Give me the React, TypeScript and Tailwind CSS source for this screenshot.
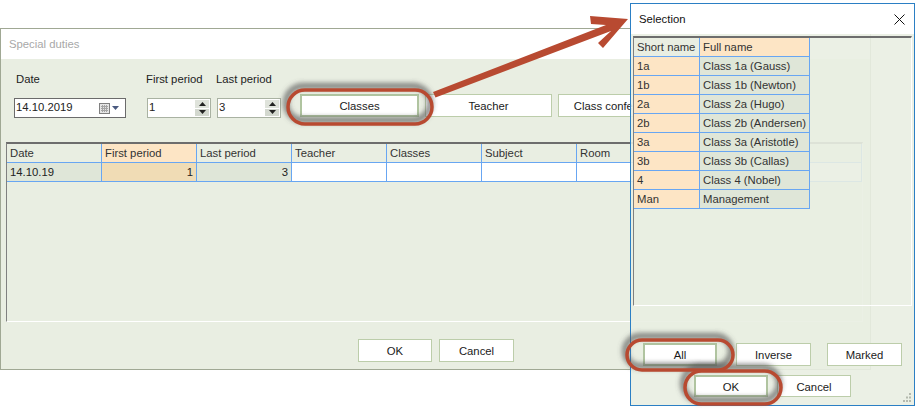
import React from "react";

const dutyColumns = ["Date", "First period", "Last period", "Teacher", "Classes", "Subject", "Room", "", ""];

const classes = [
  ["1a", "Class 1a (Gauss)"],
  ["1b", "Class 1b (Newton)"],
  ["2a", "Class 2a (Hugo)"],
  ["2b", "Class 2b (Andersen)"],
  ["3a", "Class 3a (Aristotle)"],
  ["3b", "Class 3b (Callas)"],
  ["4", "Class 4 (Nobel)"],
  ["Man", "Management"],
];

function WinButton({ label, className = "" }: { label: string; className?: string }) {
  return (
    <button className={`h-[23px] shrink-0 whitespace-nowrap border border-[#bccdaa] bg-white pt-[2px] text-[11.3px] text-[#1a1a1a] ${className}`}>
      {label}
    </button>
  );
}

function FocusButton({ label, className = "" }: { label: string; className?: string }) {
  return (
    <button className={`h-[23px] shrink-0 border-2 border-[#b0c4a0] bg-white pt-[2px] text-[11.3px] text-[#1a1a1a] ${className}`}>
      {label}
    </button>
  );
}

function SpinBox({ value }: { value: string }) {
  return (
    <div className="flex h-[20px] w-[64px] items-center justify-between border border-[#a9b2a2] bg-white pl-[1px] pr-[1px]">
      <span className="text-[11.3px] leading-none text-[#222]">{value}</span>
      <div className="flex h-[16px] w-[14px] flex-col gap-[1px]">
        <div className="flex flex-1 items-center justify-center bg-[#dfe3db]">
          <svg width="7" height="4" viewBox="0 0 7 4">
            <path d="M3.5 0 L7 4 H0 Z" fill="#222" />
          </svg>
        </div>
        <div className="flex flex-1 items-center justify-center bg-[#d3d8cf]">
          <svg width="7" height="4" viewBox="0 0 7 4">
            <path d="M0 0 H7 L3.5 4 Z" fill="#222" />
          </svg>
        </div>
      </div>
    </div>
  );
}

function DatePicker() {
  return (
    <div className="flex h-[20px] w-[112px] items-center justify-between border border-[#6b6b6b] bg-white pl-[1px] pr-[6px]">
      <span className="text-[11.3px] leading-none text-[#222]">14.10.2019</span>
      <div className="flex items-center gap-[2px]">
        <svg width="11" height="11" viewBox="0 0 11 11">
          <rect x="0.5" y="0.5" width="10" height="10" fill="#e6e6e6" stroke="#808080" />
          <path d="M2 3.5H9M2 5.5H9M2 7.5H9M3.5 2V9M5.5 2V9M7.5 2V9" stroke="#a5a5a5" strokeWidth="1" />
        </svg>
        <svg width="7" height="4" viewBox="0 0 7 4">
          <path d="M0 0 H7 L3.5 4 Z" fill="#4a5a80" />
        </svg>
      </div>
    </div>
  );
}

function SpecialDuties() {
  return (
    <div className="absolute left-0 top-[28px] h-[342px] w-[871px] border border-[#a0a894] bg-[#e9eee2]">
      <div className="flex h-[30px] items-center bg-white pl-[8px] text-[11.3px] text-[#a8a8a8]">Special duties</div>

      <div className="flex items-end pl-[13px] pt-[13px]">
        <div className="flex w-[112px] flex-col gap-[12px]">
          <span className="h-[14px] pl-[2px] text-[11.3px] leading-[14px] text-[#222]">Date</span>
          <DatePicker />
        </div>
        <div className="ml-[21px] flex w-[64px] flex-col gap-[12px]">
          <span className="-ml-[1px] h-[14px] whitespace-nowrap text-[11.3px] leading-[14px] text-[#222]">First period</span>
          <SpinBox value="1" />
        </div>
        <div className="ml-[6px] flex w-[64px] flex-col gap-[12px]">
          <span className="-ml-[1px] h-[14px] whitespace-nowrap text-[11.3px] leading-[14px] text-[#222]">Last period</span>
          <SpinBox value="3" />
        </div>
        <div className="mb-[1px] ml-[19px] flex gap-[6px]">
          <FocusButton label="Classes" className="w-[119px]" />
          <WinButton label="Teacher" className="w-[127px]" />
          <WinButton label="Class conference" className="w-[119px]" />
        </div>
      </div>

      <div className="ml-[5px] mt-[24px] h-[180px] w-[857px] border-b border-l border-r border-t-2 border-b-white border-l-[#808080] border-r-white border-t-[#6d6d6d]">
        <div className="flex h-[19px] border-b border-[#68a6f2]">
          {dutyColumns.map((name, i) => (
            <div
              key={i}
              className={`h-[18px] w-[95px] shrink-0 border-r border-[#68a6f2] pl-[3px] text-[11.3px] leading-[18px] text-[#333] ${
                i === 1 ? "bg-[#fde5c5]" : ""
              }`}
            >
              {name}
            </div>
          ))}
        </div>
        <div className="flex h-[19px] border-b border-[#68a6f2]">
          <div className="h-[18px] w-[95px] shrink-0 border-r border-[#68a6f2] bg-[#dfe6d8] pl-[3px] text-[11.3px] leading-[18px] text-[#222]">14.10.19</div>
          <div className="h-[18px] w-[95px] shrink-0 border-r border-[#68a6f2] bg-[#f0dcb5] pr-[3px] text-right text-[11.3px] leading-[18px] text-[#222]">1</div>
          <div className="h-[18px] w-[95px] shrink-0 border-r border-[#68a6f2] bg-[#dfe6d8] pr-[3px] text-right text-[11.3px] leading-[18px] text-[#222]">3</div>
          {[0, 1, 2, 3, 4, 5].map((i) => (
            <div key={i} className="h-[18px] w-[95px] shrink-0 border-r border-[#68a6f2] bg-white" />
          ))}
        </div>
      </div>

      <div className="flex gap-[7px] pl-[357px] pt-[17px]">
        <WinButton label="OK" className="w-[74px]" />
        <WinButton label="Cancel" className="w-[75px]" />
      </div>
    </div>
  );
}

function SelectionDialog() {
  return (
    <div className="absolute left-[630px] top-[3px] flex h-[403px] w-[285px] flex-col border border-[#2b7fc4] bg-[#e9eee2]/90">
      <div className="flex h-[30px] shrink-0 items-center justify-between bg-white pl-[8px] pr-[9px]">
        <span className="text-[11.3px] text-[#111]">Selection</span>
        <svg width="11" height="11" viewBox="0 0 11 11">
          <path d="M0.5 0.5 L10.5 10.5 M10.5 0.5 L0.5 10.5" stroke="#111" strokeWidth="1" fill="none" />
        </svg>
      </div>
      <div className="ml-[2px] mr-[2px] mt-[2px] h-[270px] shrink-0 border-b border-l border-r border-t-2 border-b-white border-l-[#808080] border-r-white border-t-[#6d6d6d]">
        <div className="flex h-[19px]">
          <div className="h-[19px] w-[66px] whitespace-nowrap border-b border-r border-[#68a6f2] bg-[#e9eee2] pl-[3px] text-[11.3px] leading-[19px] text-[#333]">Short name</div>
          <div className="h-[19px] w-[110px] whitespace-nowrap border-b border-r border-[#68a6f2] bg-[#fde5c5] pl-[3px] text-[11.3px] leading-[19px] text-[#333]">Full name</div>
        </div>
        {classes.map(([short, full]) => (
          <div key={short} className="flex h-[19px]">
            <div className="h-[19px] w-[66px] border-b border-r border-[#68a6f2] bg-[#fde5c5] pl-[3px] text-[11.3px] leading-[19px] text-[#333]">{short}</div>
            <div className="h-[19px] w-[110px] whitespace-nowrap border-b border-r border-[#68a6f2] bg-[#dfe6d8] pl-[3px] text-[11.3px] leading-[19px] text-[#333]">{full}</div>
          </div>
        ))}
      </div>
      <div className="flex pl-[12px] pt-[37px]">
        <FocusButton label="All" className="w-[74px]" />
        <WinButton label="Inverse" className="ml-[19px] w-[75px]" />
        <WinButton label="Marked" className="ml-[16px] w-[75px]" />
      </div>
      <div className="flex pl-[63px] pt-[9px]">
        <FocusButton label="OK" className="!h-[22px] w-[74px]" />
        <WinButton label="Cancel" className="ml-[9px] !h-[22px] w-[74px]" />
      </div>
      <svg className="absolute bottom-[2px] right-[2px]" width="10" height="10" viewBox="0 0 10 10">
        <path d="M7 0h2v2H7zM4 3.500h2v2H4zM7 3.500h2v2H7zM1 7h2v2H1zM4 7h2v2H4zM7 7h2v2H7z" fill="#b4b9ae" />
      </svg>
    </div>
  );
}

const rings = [
  { x: 288, y: 90, w: 144, h: 34 },
  { x: 627, y: 340, w: 106, h: 30 },
  { x: 685, y: 371, w: 96, h: 33 },
];

// callouts painted over the screenshot: rings round the buttons and the arrow
function Annotations() {
  return (
    <svg className="pointer-events-none absolute left-0 top-0" width="917" height="410" viewBox="0 0 917 410">
      <defs>
        <filter id="ringBlur" x="-20%" y="-50%" width="140%" height="200%">
          <feGaussianBlur stdDeviation="2.4" />
        </filter>
      </defs>
      {rings.map((r) => (
        <rect
          key={r.x}
          x={r.x - 2}
          y={r.y - 4}
          width={r.w}
          height={r.h}
          rx={r.h / 2}
          fill="none"
          stroke="#555"
          strokeOpacity="0.7"
          strokeWidth="6"
          filter="url(#ringBlur)"
        />
      ))}
      {rings.map((r) => (
        <rect key={r.x} x={r.x} y={r.y} width={r.w} height={r.h} rx={r.h / 2} fill="none" stroke="#b84a31" strokeWidth="3.500" />
      ))}
      <polygon
        points="433,92 606,25 591,24 590,16 628,19 603,48 598,43 611,31 435.500,97.500"
        fill="#b84a31"
      />
    </svg>
  );
}

export default function App() {
  return (
    <div className="relative h-[410px] w-[917px] overflow-hidden bg-white font-['Liberation_Sans',Arial,sans-serif]">
      <SpecialDuties />
      <SelectionDialog />
      <Annotations />
    </div>
  );
}
